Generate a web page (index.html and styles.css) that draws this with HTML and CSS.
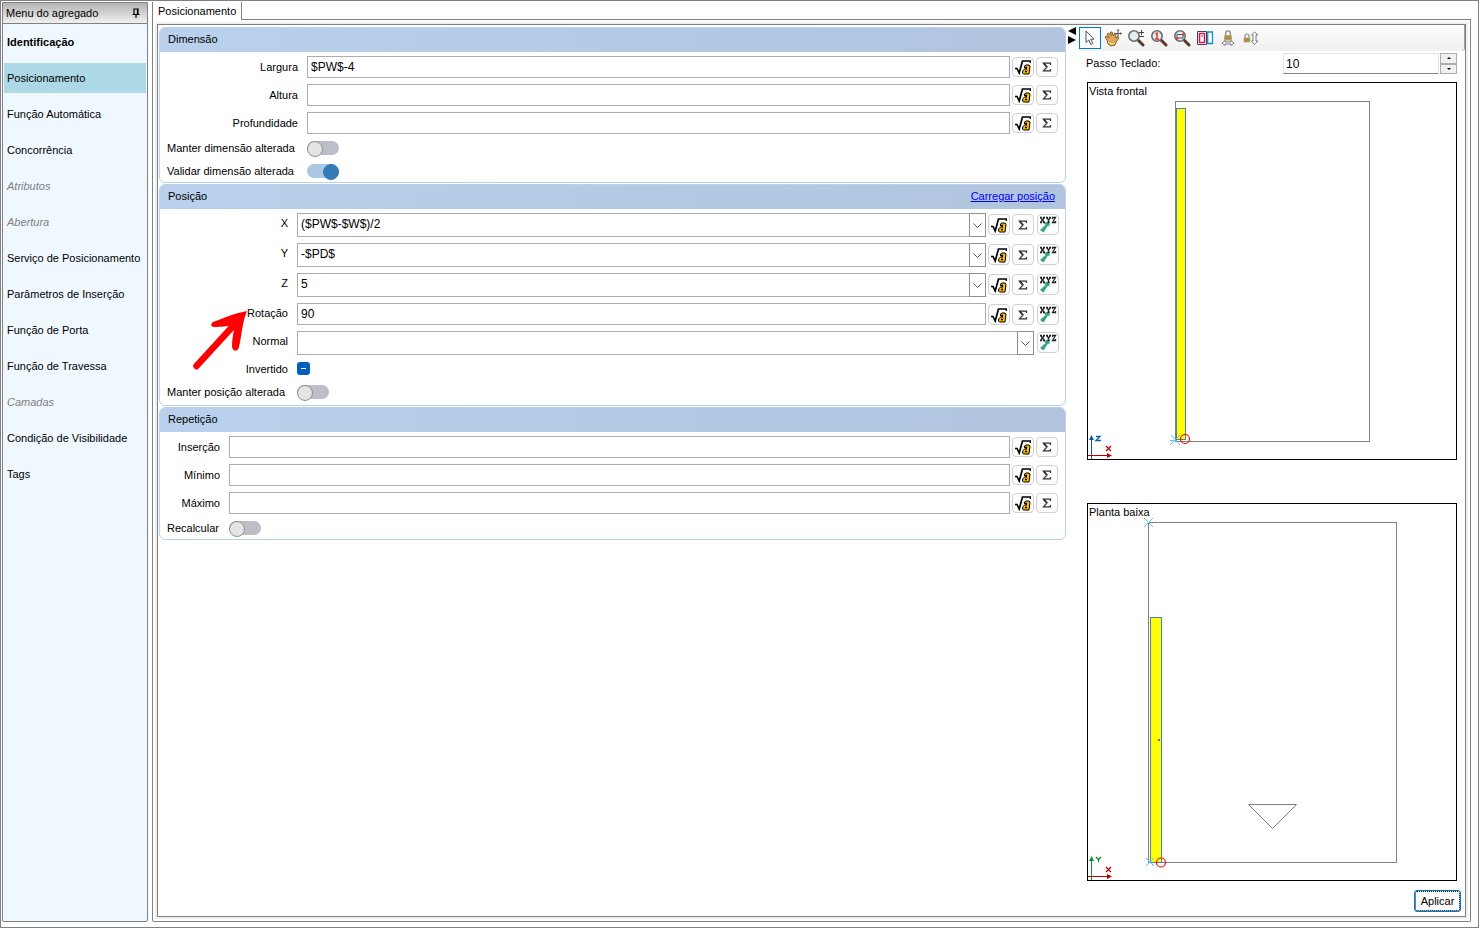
FILE: index.html
```
<!DOCTYPE html>
<html lang="pt-BR">
<head>
<meta charset="utf-8">
<title>Posicionamento</title>
<link rel="stylesheet" href="styles.css">
</head>
<body>
<svg class="defs" aria-hidden="true">
  <defs>
    <symbol id="sqrt" viewBox="0 0 16 16">
      <path d="M0 9.500h2l2.200 4.500L7.500 2H15.500v2" fill="none" stroke="#000" stroke-width="1.700"/>
      <path d="M9 8l1.500-2h3.500l1 1-1 8H8.500L7.500 14l.5-2.500 1.500-1.500H12z" fill="#ffb900" stroke="#000"/>
      <path d="M9.500 8.500H12M10 12.500h2" stroke="#000" stroke-width="1.300"/>
    </symbol>
    <symbol id="sigma" viewBox="0 0 10 10">
      <path d="M8.500 3V1.200H1.500L5 5 1.500 8.800h7V7" fill="none" stroke="#333" stroke-width="1.200"/>
      <path d="M1.500 1.200L5 5" stroke="#333" stroke-width="1.800"/>
    </symbol>
    <symbol id="xyz" viewBox="0 0 18 18">
      <path d="M10.500 5v5.500L9 9.500 4.500 16.500 1 14l5.500-5L5 7z" fill="#33a683"/>
      <path d="M1 1.500h2M4 1.500h2M1.500 1.500l4 5M5.500 1.500l-4 5M1 6.500h2M4 6.500h2M7 1.500h2M10 1.500h2M7.500 1.500L9.500 4l2-2.500M9.500 4v2.500M8.500 6.500h2M13.500 3V1.500h3l-3 5h3V5" fill="none" stroke="#222" stroke-width="1.300"/>
    </symbol>
    <symbol id="lens" viewBox="0 0 18 18">
      <path d="M11 11l5 5" stroke="#5b3a2a" stroke-width="3" stroke-linecap="round"/>
      <circle cx="7" cy="7" r="5.200" fill="#e3edf1" stroke="#6c6c6c" stroke-width="1.600"/>
    </symbol>
    <symbol id="lock" viewBox="0 0 10 12">
      <path d="M2.500 6V3.500a2.500 2.500 0 0 1 5 0V6" fill="none" stroke="#8c8c80" stroke-width="1.500"/>
      <rect x="1" y="5.500" width="8" height="6" fill="#b9a45c"/>
      <path d="M1 7.500h8M1 9.500h8" stroke="#8a783c" stroke-width=".8"/>
    </symbol>
  </defs>
</svg>
<div class="window">
  <aside class="side">
    <header class="side-head">
      <span>Menu do agregado</span>
      <button class="pin" aria-label="Fixar menu"><svg width="8" height="10" viewBox="0 0 8 10"><path d="M2 6V1h4v5M0.500 6.500h7M4 7v3M5.500 1v5" fill="none" stroke="#000" stroke-width="1.200"/></svg></button>
    </header>
    <nav>
      <ul class="menu">
        <li class="strong">Identificação</li>
        <li class="active">Posicionamento</li>
        <li>Função Automática</li>
        <li>Concorrência</li>
        <li class="off">Atributos</li>
        <li class="off">Abertura</li>
        <li>Serviço de Posicionamento</li>
        <li>Parâmetros de Inserção</li>
        <li>Função de Porta</li>
        <li>Função de Travessa</li>
        <li class="off">Camadas</li>
        <li>Condição de Visibilidade</li>
        <li>Tags</li>
      </ul>
    </nav>
  </aside>

  <main class="main">
    <div class="tabs"><button class="tab">Posicionamento</button><span class="tab-rest"></span></div>
    <div class="page">
      <div class="frame">
        <form class="form">
          <section class="group dim">
            <h2 class="group-head">Dimensão</h2>
            <div class="rows">
              <div class="row"><label for="larg">Largura</label><input class="field" id="larg" value="$PW$-4"><button type="button" class="tool" aria-label="Fórmula"><svg width="16" height="16"><use href="#sqrt"/></svg></button><button type="button" class="tool" aria-label="Soma"><svg width="10" height="10"><use href="#sigma"/></svg></button></div>
              <div class="row"><label for="alt">Altura</label><input class="field" id="alt"><button type="button" class="tool" aria-label="Fórmula"><svg width="16" height="16"><use href="#sqrt"/></svg></button><button type="button" class="tool" aria-label="Soma"><svg width="10" height="10"><use href="#sigma"/></svg></button></div>
              <div class="row"><label for="prof">Profundidade</label><input class="field" id="prof"><button type="button" class="tool" aria-label="Fórmula"><svg width="16" height="16"><use href="#sqrt"/></svg></button><button type="button" class="tool" aria-label="Soma"><svg width="10" height="10"><use href="#sigma"/></svg></button></div>
              <div class="row flip"><label for="mda">Manter dimensão alterada</label><input type="checkbox" class="switch" id="mda"></div>
              <div class="row flip"><label for="vda">Validar dimensão alterada</label><input type="checkbox" class="switch" id="vda" checked></div>
            </div>
          </section>

          <section class="group pos">
            <h2 class="group-head">Posição<a class="load" href="#">Carregar posição</a></h2>
            <div class="rows">
              <div class="row"><label for="px">X</label><span class="combo"><select id="px"><option>($PW$-$W$)/2</option></select><svg class="chev" viewBox="0 0 15 22"><path d="M3.500 9.500l4 4 4-4" fill="none" stroke="#555"/></svg></span><button type="button" class="tool" aria-label="Fórmula"><svg width="16" height="16"><use href="#sqrt"/></svg></button><button type="button" class="tool" aria-label="Soma"><svg width="10" height="10"><use href="#sigma"/></svg></button><button type="button" class="tool xyz" aria-label="Coordenadas"><svg width="18" height="18"><use href="#xyz"/></svg></button></div>
              <div class="row"><label for="py">Y</label><span class="combo"><select id="py"><option>-$PD$</option></select><svg class="chev" viewBox="0 0 15 22"><path d="M3.500 9.500l4 4 4-4" fill="none" stroke="#555"/></svg></span><button type="button" class="tool" aria-label="Fórmula"><svg width="16" height="16"><use href="#sqrt"/></svg></button><button type="button" class="tool" aria-label="Soma"><svg width="10" height="10"><use href="#sigma"/></svg></button><button type="button" class="tool xyz" aria-label="Coordenadas"><svg width="18" height="18"><use href="#xyz"/></svg></button></div>
              <div class="row"><label for="pz">Z</label><span class="combo"><select id="pz"><option>5</option></select><svg class="chev" viewBox="0 0 15 22"><path d="M3.500 9.500l4 4 4-4" fill="none" stroke="#555"/></svg></span><button type="button" class="tool" aria-label="Fórmula"><svg width="16" height="16"><use href="#sqrt"/></svg></button><button type="button" class="tool" aria-label="Soma"><svg width="10" height="10"><use href="#sigma"/></svg></button><button type="button" class="tool xyz" aria-label="Coordenadas"><svg width="18" height="18"><use href="#xyz"/></svg></button></div>
              <div class="row"><label for="rot">Rotação</label><input class="field" id="rot" value="90"><button type="button" class="tool" aria-label="Fórmula"><svg width="16" height="16"><use href="#sqrt"/></svg></button><button type="button" class="tool" aria-label="Soma"><svg width="10" height="10"><use href="#sigma"/></svg></button><button type="button" class="tool xyz" aria-label="Coordenadas"><svg width="18" height="18"><use href="#xyz"/></svg></button></div>
              <div class="row"><label for="norm">Normal</label><span class="combo"><select id="norm"><option></option></select><svg class="chev" viewBox="0 0 15 22"><path d="M3.500 9.500l4 4 4-4" fill="none" stroke="#555"/></svg></span><button type="button" class="tool xyz" aria-label="Coordenadas"><svg width="18" height="18"><use href="#xyz"/></svg></button></div>
              <div class="row tick"><label for="inv">Invertido</label><input type="checkbox" class="mixed" id="inv" checked></div>
              <div class="row flip"><label for="mpa">Manter posição alterada</label><input type="checkbox" class="switch" id="mpa"></div>
            </div>
            <svg class="pointer" width="58" height="66" viewBox="0 0 58 66" aria-hidden="true">
              <path d="M5.500 59L43 18" stroke="#f00" stroke-width="6.500" stroke-linecap="round"/>
              <path d="M56 4C44 6 33 11 22 15c-3 2-2 5 1 5 8 0 12-1 17-1l3 3c-1 6-2 12-2 17 0 6 6 6 7 1 3-13 3-24 8-36z" fill="#f00"/>
            </svg>
          </section>

          <section class="group rep">
            <h2 class="group-head">Repetição</h2>
            <div class="rows">
              <div class="row"><label for="ins">Inserção</label><input class="field" id="ins"><button type="button" class="tool" aria-label="Fórmula"><svg width="16" height="16"><use href="#sqrt"/></svg></button><button type="button" class="tool" aria-label="Soma"><svg width="10" height="10"><use href="#sigma"/></svg></button></div>
              <div class="row"><label for="min">Mínimo</label><input class="field" id="min"><button type="button" class="tool" aria-label="Fórmula"><svg width="16" height="16"><use href="#sqrt"/></svg></button><button type="button" class="tool" aria-label="Soma"><svg width="10" height="10"><use href="#sigma"/></svg></button></div>
              <div class="row"><label for="max">Máximo</label><input class="field" id="max"><button type="button" class="tool" aria-label="Fórmula"><svg width="16" height="16"><use href="#sqrt"/></svg></button><button type="button" class="tool" aria-label="Soma"><svg width="10" height="10"><use href="#sigma"/></svg></button></div>
              <div class="row flip"><label for="rec">Recalcular</label><input type="checkbox" class="switch" id="rec"></div>
            </div>
          </section>
        </form>

        <div class="splitter"><svg width="8" height="18" viewBox="0 0 8 18"><path d="M8 0v8L0 4zM0 9v8l8-4z"/></svg></div>

        <div class="preview">
          <div class="toolbar">
            <button class="tb on" aria-label="Selecionar"><svg width="18" height="18" viewBox="0 0 18 18"><path d="M5 2v11.500l2.800-2.500 2 4.500 2-1-2-4.300H13z" fill="#fff" stroke="#555"/></svg></button>
            <button class="tb" aria-label="Mover"><svg width="18" height="18" viewBox="0 0 18 18"><path d="M3 11L1 8l1-1 3 2-2-4 1.500-1 2.500 3-.5-4H8l1.500 4L10.500 4l1.500 1-.5 4 2-1 1.500 1-3 4-1 3-4 1-3-2z" fill="#dca956" stroke="#8d5e25"/><path d="M4 13l4 2.500 3-1.500" stroke="#fff0bd" fill="none"/><path d="M14 0.500v8M10.500 4.500h7M13 1.500l1-1 1 1M16.500 3.500l1 1-1 1" fill="none" stroke="#555"/></svg></button>
            <button class="tb" aria-label="Zoom"><svg width="18" height="18" viewBox="0 0 18 18"><use href="#lens"/><path d="M12 3.500h5M14.500 1v5M12 7.500h5" stroke="#444"/></svg></button>
            <button class="tb" aria-label="Zoom 1:1"><svg width="18" height="18" viewBox="0 0 18 18"><use href="#lens"/><path d="M5.500 5L7 4v6M5 10h4" fill="none" stroke="#e33" stroke-width="1.500"/></svg></button>
            <button class="tb" aria-label="Zoom na janela"><svg width="18" height="18" viewBox="0 0 18 18"><use href="#lens"/><path d="M4 5.500h6v3.500H4z" fill="none" stroke="#555"/><path d="M2.500 9.500h3M4 8v3M8.500 5.500h3M10 4v3" stroke="#e33"/></svg></button>
            <button class="tb" aria-label="Vistas"><svg width="18" height="18" viewBox="0 0 18 18"><path d="M1.500 2.500h9v13h-9z" fill="#fff" stroke="#444"/><path d="M3.500 4.500h5v9h-5z" fill="#fff" stroke="#d4145a" stroke-width="1.500"/><path d="M6 6v2" stroke="#d4145a"/><path d="M11.700 3h4.800v11.500h-4.800z" fill="#fff" stroke="#0a8fd8" stroke-width="1.300"/></svg></button>
            <button class="tb" aria-label="Travar horizontal"><svg width="18" height="18" viewBox="0 0 18 18"><use href="#lock" x="4" y="1" width="10" height="11"/><path d="M3 14l3-2.500v1.500h6v-1.500l3 2.500-3 2.500V15H6v1.500z" fill="#fff" stroke="#777"/></svg></button>
            <button class="tb" aria-label="Travar vertical"><svg width="18" height="18" viewBox="0 0 18 18"><use href="#lock" x="1" y="4" width="8" height="10"/><path d="M12.500 3L16 6h-2v6h2l-3.500 3.500L9.500 12H11V6H9.500z" fill="#fff" stroke="#777"/></svg></button>
          </div>
          <div class="step">
            <label for="passo">Passo Teclado:</label>
            <input type="number" id="passo" value="10">
            <span class="spin"><button aria-label="Aumentar"><svg width="4" height="2" viewBox="0 0 4 2"><path d="M0 2l2-2 2 2z"/></svg></button><button aria-label="Diminuir"><svg width="4" height="2" viewBox="0 0 4 2"><path d="M0 0l2 2 2-2z"/></svg></button></span>
          </div>
          <div class="views">
            <svg class="view" viewBox="0 0 370 378">
              <g fill="none" shape-rendering="crispEdges">
                <path d="M.5.500h369v377H.5z" fill="#fff" stroke="#000"/>
                <path d="M88.500 19.500h194v340h-194z" stroke="#808080"/>
                <path d="M89.500 26.500h9v331h-9z" fill="#ff0" stroke="#4682b4"/>
                <path d="M4.500 355v22" stroke="#0a5bb5"/>
                <path d="M1 373.500h23" stroke="#b80000"/>
              </g>
              <path d="M2 358l2.500-5 2.500 5z" fill="#0a5bb5"/>
              <path d="M20 371l5 2.500-5 2.500z" fill="#b80000"/>
              <path d="M9 354.500h4l-4 4h5" fill="none" stroke="#0a5bb5" stroke-width="1.300"/>
              <path d="M19 364l5 5M24 364l-5 5" stroke="#b80000" stroke-width="1.200"/>
              <path d="M84 353l9 10M93 353l-10 10M83 358.500h7" stroke="#5bc4f0"/>
              <circle cx="98" cy="357" r="4.500" fill="none" stroke="#f00" stroke-width="1.200"/>
              <text x="2" y="13">Vista frontal</text>
            </svg>
            <svg class="view" viewBox="0 0 370 378">
              <g fill="none" shape-rendering="crispEdges">
                <path d="M.5.500h369v377H.5z" fill="#fff" stroke="#000"/>
                <path d="M61.500 19.500h248v340h-248z" stroke="#808080"/>
                <path d="M63.500 114.500h11v245h-11z" fill="#ff0" stroke="#4682b4"/>
                <path d="M71 236h2v2h-2z" fill="#4682b4"/>
                <path d="M4.500 355v22" stroke="#009530"/>
                <path d="M1 373.500h23" stroke="#b80000"/>
              </g>
              <path d="M161.500 301.500h48l-24 24z" fill="none" stroke="#808080"/>
              <path d="M2 358l2.500-5 2.500 5z" fill="#009530"/>
              <path d="M20 371l5 2.500-5 2.500z" fill="#b80000"/>
              <path d="M9 354l2.500 2.500L14 354M11.500 356v3" fill="none" stroke="#009530" stroke-width="1.300"/>
              <path d="M19 364l5 5M24 364l-5 5" stroke="#b80000" stroke-width="1.200"/>
              <path d="M57 15l9 9M66 15l-9 9M59 355l8 8M67 355l-8 8" stroke="#5bc4f0"/>
              <circle cx="74" cy="359.500" r="4.500" fill="none" stroke="#f00" stroke-width="1.200"/>
              <text x="2" y="13">Planta baixa</text>
            </svg>
          </div>
          <button class="apply">Aplicar</button>
        </div>
      </div>
    </div>
  </main>
</div>
</body>
</html>
```

FILE: styles.css
```
* { box-sizing: border-box; }
body {
  margin: 0;
  font-family: "Liberation Sans", Arial, sans-serif;
  font-size: 11px;
  line-height: 14px;
  color: #000;
  background: #fff;
}
button, input, select { font: inherit; color: inherit; margin: 0; padding: 0; }
.defs { position: absolute; width: 0; height: 0; }

.window {
  display: flex;
  gap: 4px;
  min-height: 100vh;
  padding: 1px 7px 5px 1px;
  border: 1px solid #808080;
}

/* side menu */
.side {
  display: flex;
  flex-direction: column;
  width: 146px;
  flex: none;
  background: #f0f8ff;
  border: 1px solid #808080;
  border-radius: 0 0 2px 2px;
}
.side-head {
  display: flex;
  align-items: center;
  justify-content: space-between;
  height: 21px;
  padding: 0 7px 0 3px;
  border-bottom: 1px solid #808080;
  background: linear-gradient(#b4b4b4, #f0f0f0);
}
.pin { display: flex; border: 0; background: none; }
.menu {
  display: flex;
  flex-direction: column;
  gap: 6px;
  margin: 0;
  padding: 3px 1px;
  list-style: none;
}
.menu li { height: 30px; line-height: 30px; padding-left: 3px; white-space: nowrap; }
.menu .strong { font-weight: bold; }
.menu .active { background: #add8e6; }
.menu .off { color: #808080; font-style: italic; }

/* tab strip and page */
.main { display: flex; flex-direction: column; flex: 1; min-width: 0; }
.tabs { display: flex; height: 18px; }
.tab {
  padding: 0 5px;
  background: #fff;
  border: 1px solid #808080;
  border-width: 0 1px 0 1px;
}
.tab-rest { flex: 1; border-bottom: 1px solid #808080; }
.page {
  display: flex;
  flex: 1;
  padding: 2px;
  border: 1px solid #808080;
  border-top: 0;
  border-radius: 0 0 2px 2px;
}
.frame {
  display: flex;
  flex: 1;
  min-width: 0;
  border: 1px solid #808080;
  box-shadow: 0 0 0 2px #f0f0f0;
  margin: 2px;
}

/* form groups */
.form {
  display: flex;
  flex-direction: column;
  gap: 1px;
  flex: 1;
  min-width: 0;
  padding: 2px 1px;
}
.group {
  position: relative;
  border: 1px solid #b8d0ea;
  border-radius: 6px;
}
.group-head {
  display: flex;
  align-items: center;
  justify-content: space-between;
  height: 24px;
  margin: 0;
  padding: 0 10px 2px 8px;
  font-size: 11px;
  font-weight: normal;
  border-radius: 5px 5px 0 0;
  background: linear-gradient(90deg, #b9d1ec, #b0c4de);
}
.load { color: #00f; text-decoration: underline; }
.rows { display: flex; flex-direction: column; gap: 6px; padding: 4px 7px; }
.pos .rows { padding: 4px 6px 6px 7px; }
.row { display: flex; align-items: center; gap: 2px; }
.row label { flex: none; text-align: right; white-space: nowrap; margin-right: 7px; }
.dim .row label { width: 131px; }
.pos .row label { width: 121px; }
.rep .row label { width: 53px; }
.row.flip label { text-align: left; }
.pos .row { align-items: flex-start; }
.pos .row label { line-height: 20px; }
.row.flip, .pos .row.flip, .pos .row.tick { align-items: center; height: 15px; }
.row.flip + .row.flip, .row.tick + .row.flip { margin-top: 2px; }
.field {
  flex: 1;
  min-width: 0;
  height: 22px;
  padding: 0 3px;
  font-size: 12px;
  border: 1px solid #ababb0;
  background: #fff;
}
.combo { position: relative; display: flex; flex: 1; min-width: 0; height: 24px; }
.combo select {
  appearance: none;
  flex: 1;
  min-width: 0;
  height: 24px;
  padding: 0 20px 2px 3px;
  font-size: 12px;
  background: #fff;
  border: 1px solid #ababb0;
  border-radius: 0;
}
.chev {
  position: absolute;
  top: 0;
  right: 0;
  width: 17px;
  height: 24px;
  border: 1px solid #909090;
  pointer-events: none;
}
.tool {
  display: flex;
  align-items: center;
  justify-content: center;
  flex: none;
  width: 22px;
  height: 20px;
  border: 1px solid #d0d0d0;
  border-radius: 4px;
  background: #fdfdfd;
}
.pos .tool { margin-top: 1px; height: 21px; }
.pos .xyz { margin-left: 1px; }
.switch {
  appearance: none;
  display: flex;
  width: 32px;
  height: 14px;
  border-radius: 7px;
  background: #bcbec8;
}
.switch::before {
  content: "";
  width: 14px;
  height: 14px;
  border: 1px solid #909090;
  border-radius: 50%;
  background: #e4e4e4;
}
.switch:checked { justify-content: flex-end; background: #aac8e4; }
.switch:checked::before { border-color: #337ab7; background: #337ab7; }
.mixed {
  appearance: none;
  display: grid;
  place-items: center;
  width: 13px;
  height: 13px;
  border-radius: 3px;
  background: #005fb8;
}
.mixed::before { content: ""; width: 5px; height: 1px; background: #fff; }
.pointer { position: absolute; left: 31px; top: 122px; }

.splitter { flex: none; width: 12px; padding: 2px 1px; }
.splitter svg { display: block; }

/* preview column */
.preview { display: flex; flex-direction: column; flex: none; width: 386px; }
.toolbar {
  display: flex;
  align-items: center;
  height: 26px;
  border-right: 1px solid #a0a0a0;
  border-radius: 0 0 3px 0;
  background: linear-gradient(#fdfdfd, #f0f0f0);
}
.tb {
  display: flex;
  align-items: center;
  justify-content: center;
  width: 23px;
  height: 22px;
  border: 1px solid transparent;
  background: none;
}
.tb.on { width: 22px; border-color: #0078d7; background: #fafafa; }
.step { display: flex; padding: 2px 8px 8px 7px; }
.step label { flex: 1; line-height: 20px; }
.step input {
  appearance: textfield;
  width: 156px;
  height: 21px;
  padding: 0 2px;
  font-size: 12px;
  border: 1px solid #e3e3e3;
  border-bottom-color: #868686;
  background: #fff;
}
.step input::-webkit-inner-spin-button { display: none; }
.spin { display: flex; flex-direction: column; width: 17px; margin-left: 1px; }
.spin button {
  display: flex;
  flex: 1;
  align-items: center;
  justify-content: center;
  border: 1px solid #adadad;
  background: #f0f0f0;
}
.views { display: flex; flex-direction: column; gap: 43px; padding: 0 8px; }
.view { display: block; width: 100%; height: auto; }
.view text { font-size: 11px; }
.apply {
  align-self: flex-end;
  width: 47px;
  height: 22px;
  margin: 9px 4px 0 0;
  border: 1px solid #0078d7;
  border-radius: 3px;
  background: #fdfdfd;
  outline: 1px dotted #000;
  outline-offset: -2px;
}
```
